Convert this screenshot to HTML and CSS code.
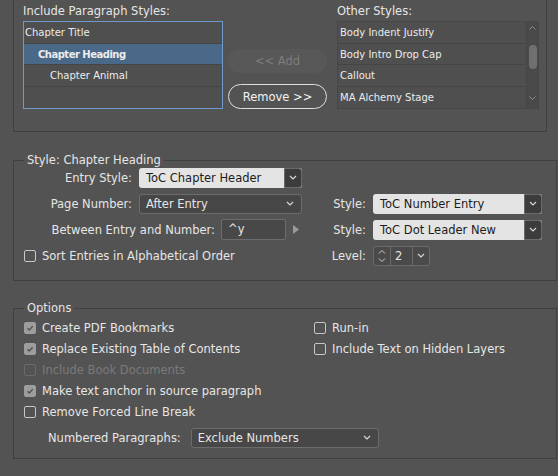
FILE: index.html
```html
<!DOCTYPE html>
<html>
<head>
<meta charset="utf-8">
<link rel="stylesheet" href="styles.css">
</head>
<body>
<div class="top-box">
  <div class="col-left">
    <div class="cap">Include Paragraph Styles:</div>
    <div class="list list-active">
      <div class="row">Chapter Title</div>
      <div class="row sel ind1">Chapter Heading</div>
      <div class="row ind2">Chapter Animal</div>
      <div class="row last"></div>
    </div>
  </div>
  <div class="col-mid">
    <div class="btn btn-add">&lt;&lt; Add</div>
    <div class="btn btn-remove">Remove &gt;&gt;</div>
  </div>
  <div class="col-right">
    <div class="cap">Other Styles:</div>
    <div class="list list-other">
      <div class="rows">
        <div class="row o">Body Indent Justify</div>
        <div class="row o">Body Intro Drop Cap</div>
        <div class="row o">Callout</div>
        <div class="row o last">MA Alchemy Stage</div>
      </div>
      <div class="scrollbar">
        <div class="sb-up"><svg width="7" height="4" viewBox="0 0 7 4"><path d="M0.5 3.5l3-3 3 3" fill="none" stroke="#8c8c8c" stroke-width="1"/></svg></div>
        <div class="sb-thumb"></div>
        <div class="sb-space"></div>
        <div class="sb-down"><svg width="7" height="4" viewBox="0 0 7 4"><path d="M0.5 0.5l3 3 3-3" fill="none" stroke="#8c8c8c" stroke-width="1"/></svg></div>
      </div>
    </div>
  </div>
</div>

<fieldset class="group style-group">
  <legend>Style: Chapter Heading</legend>
  <div class="srows">
    <div class="srow">
      <div class="left-cell">
        <span class="lbl w1">Entry Style:</span>
        <div class="drop light w-main"><span class="dtext">ToC Chapter Header</span><span class="dbtn"><svg width="8" height="5" viewBox="0 0 8 5"><path d="M1 1l3 3 3-3" fill="none" stroke="#d8d8d8" stroke-width="1.2"/></svg></span></div>
      </div>
    </div>
    <div class="srow">
      <div class="left-cell">
        <span class="lbl w1">Page Number:</span>
        <div class="drop dark w-main"><span class="dtext">After Entry</span><svg class="chev" width="8" height="5" viewBox="0 0 8 5"><path d="M1 1l3 3 3-3" fill="none" stroke="#d8d8d8" stroke-width="1.2"/></svg></div>
      </div>
      <div class="right-cell">
        <span class="lbl w2">Style:</span>
        <div class="drop light w-right"><span class="dtext">ToC Number Entry</span><span class="dbtn"><svg width="8" height="5" viewBox="0 0 8 5"><path d="M1 1l3 3 3-3" fill="none" stroke="#d8d8d8" stroke-width="1.2"/></svg></span></div>
      </div>
    </div>
    <div class="srow">
      <div class="left-cell">
        <span class="lbl w3">Between Entry and Number:</span>
        <div class="input">^y</div>
        <svg class="tri" width="6" height="9" viewBox="0 0 6 9"><path d="M0 0L6 4.5L0 9z" fill="#9a9a9a"/></svg>
      </div>
      <div class="right-cell">
        <span class="lbl w2">Style:</span>
        <div class="drop light w-right"><span class="dtext">ToC Dot Leader New</span><span class="dbtn"><svg width="8" height="5" viewBox="0 0 8 5"><path d="M1 1l3 3 3-3" fill="none" stroke="#d8d8d8" stroke-width="1.2"/></svg></span></div>
      </div>
    </div>
    <div class="srow">
      <div class="left-cell pad-cb">
        <span class="cb"></span>
        <span class="cb-text">Sort Entries in Alphabetical Order</span>
      </div>
      <div class="right-cell">
        <span class="lbl w2">Level:</span>
        <div class="spinner">
          <span class="sp-arrows"><svg width="8" height="14" viewBox="0 0 8 14"><path d="M1 4.5l3-3 3 3M1 9.5l3 3 3-3" fill="none" stroke="#cfcfcf" stroke-width="1"/></svg></span>
          <span class="sp-val">2</span>
          <span class="sp-chev"><svg width="8" height="5" viewBox="0 0 8 5"><path d="M1 1l3 3 3-3" fill="none" stroke="#d8d8d8" stroke-width="1.2"/></svg></span>
        </div>
      </div>
    </div>
  </div>
</fieldset>

<fieldset class="group opt-group">
  <legend>Options</legend>
  <div class="opts">
    <div class="opt-col">
      <div class="cb-row"><span class="cb on"><svg width="12" height="12" viewBox="0 0 12 12"><path d="M3 6.3l2.1 2.1L9.2 3.9" fill="none" stroke="#515151" stroke-width="1.6"/></svg></span><span class="cb-text">Create PDF Bookmarks</span></div>
      <div class="cb-row"><span class="cb on"><svg width="12" height="12" viewBox="0 0 12 12"><path d="M3 6.3l2.1 2.1L9.2 3.9" fill="none" stroke="#515151" stroke-width="1.6"/></svg></span><span class="cb-text">Replace Existing Table of Contents</span></div>
      <div class="cb-row disabled"><span class="cb"></span><span class="cb-text">Include Book Documents</span></div>
      <div class="cb-row"><span class="cb on"><svg width="12" height="12" viewBox="0 0 12 12"><path d="M3 6.3l2.1 2.1L9.2 3.9" fill="none" stroke="#515151" stroke-width="1.6"/></svg></span><span class="cb-text">Make text anchor in source paragraph</span></div>
      <div class="cb-row"><span class="cb"></span><span class="cb-text">Remove Forced Line Break</span></div>
    </div>
    <div class="opt-col">
      <div class="cb-row"><span class="cb"></span><span class="cb-text">Run-in</span></div>
      <div class="cb-row"><span class="cb"></span><span class="cb-text">Include Text on Hidden Layers</span></div>
    </div>
  </div>
  <div class="num-row">
    <span class="lbl">Numbered Paragraphs:</span>
    <div class="drop dark w-num"><span class="dtext">Exclude Numbers</span><svg class="chev" width="8" height="5" viewBox="0 0 8 5"><path d="M1 1l3 3 3-3" fill="none" stroke="#d8d8d8" stroke-width="1.2"/></svg></div>
  </div>
</fieldset>
</body>
</html>
```
FILE: styles.css
```css
* { box-sizing: border-box; }
html, body { margin: 0; padding: 0; }
body {
  background: #535353;
  width: 558px;
  height: 476px;
  overflow: hidden;
  font-family: "DejaVu Sans", sans-serif;
  font-size: 11.5px;
  color: #e6e6e6;
}

/* top box */
.top-box {
  margin: 0 11px 0 13px;
  height: 132px;
  border: 1px solid #404040;
  border-top: none;
  display: flex;
  padding-left: 9px;
}
.col-left { width: 200px; flex: none; }
.cap { height: 21px; line-height: 14px; padding-top: 4px; white-space: nowrap; }
.list {
  height: 88px;
  border: 1px solid #474747;
  background: #4f4f4f;
}
.list-active { border-color: #6e99c9; }
.row {
  height: 21.5px;
  line-height: 21px;
  border-bottom: 1px solid #454545;
  font-size: 10px;
  padding-left: 1px;
  white-space: nowrap;
  color: #ececec;
}
.row.last { border-bottom: none; }
.row.sel { background: #4a6888; font-weight: bold; letter-spacing: -0.5px; }
.row.ind1 { padding-left: 14px; }
.row.ind2 { padding-left: 26px; }
.row.o { padding-left: 2px; }

.col-mid {
  width: 99px;
  flex: none;
  margin-left: 5px;
  padding-top: 49px;
  display: flex;
  flex-direction: column;
  gap: 11px;
}
.btn {
  display: flex;
  align-items: center;
  justify-content: center;
  border-radius: 13px;
  font-size: 11.5px;
}
.btn-add { height: 24px; background: #585858; color: #7d7d7d; }
.btn-remove { height: 25px; border: 1px solid #dedede; color: #f2f2f2; }

.col-right { width: 202px; flex: none; margin-left: 10px; }
.list-other { display: flex; }
.list-other .rows { flex: 1; min-width: 0; }
.scrollbar {
  width: 12px;
  flex: none;
  background: #4a4a4a;
  border-left: 1px solid #464646;
  display: flex;
  flex-direction: column;
  align-items: center;
}
.sb-up { height: 23px; padding-top: 4px; display: flex; justify-content: center; }
.sb-thumb { width: 8px; height: 24px; background: #707070; border-radius: 4px; }
.sb-space { flex: 1; }
.sb-down { height: 12px; display: flex; justify-content: center; }

/* fieldsets */
.group {
  margin: 21px 1px 0 13px;
  border: 1px solid #404040;
  padding: 0 0 14px 0;
  min-width: 0;
}
.group legend {
  margin-left: 10px;
  padding: 0 3px;
  line-height: 14px;
  font-size: 11.5px;
}
.srows { display: flex; flex-direction: column; gap: 5px; }
.srow { display: flex; height: 21px; align-items: center; }
.left-cell { width: 296px; flex: none; display: flex; align-items: center; height: 21px; }
.right-cell { display: flex; align-items: center; height: 21px; }
.lbl { text-align: right; flex: none; white-space: nowrap; }
.w1 { width: 118px; margin-right: 7px; }
.w2 { width: 56px; margin-right: 7px; }
.w3 { width: 201px; margin-right: 6px; }

.drop {
  height: 20px;
  display: flex;
  align-items: center;
  border-radius: 3px;
  flex: none;
}
.drop .dtext { flex: 1; padding-left: 7px; white-space: nowrap; }
.drop.light { background: #e4e4e4; color: #1c1c1c; }
.drop.light .dbtn {
  width: 18px;
  height: 20px;
  background: #3c3c3c;
  border: 1px solid #6a6a6a;
  border-radius: 0 3px 3px 0;
  display: flex;
  align-items: center;
  justify-content: center;
}
.drop.dark { background: #474747; border: 1px solid #6c6c6c; }
.drop.dark .dtext { padding-left: 6px; }
.drop .chev { margin-right: 7px; }
.w-main { width: 163px; }
.w-right { width: 169px; }
.w-num { width: 188px; }

.input {
  width: 65px;
  height: 21px;
  background: #484848;
  border: 1px solid #6c6c6c;
  border-radius: 2px;
  padding-left: 6px;
  line-height: 19px;
}
.tri { margin-left: 7px; }

.pad-cb { padding-left: 10px; }
.cb {
  width: 12px;
  height: 12px;
  border: 1px solid #c6c6c6;
  border-radius: 2px;
  flex: none;
  display: flex;
  align-items: center;
  justify-content: center;
}
.cb.on { background: #9d9d9d; border-color: #9d9d9d; }
.cb-text { margin-left: 6px; white-space: nowrap; }

.spinner {
  width: 57px;
  height: 20px;
  border: 1px solid #6a6a6a;
  border-radius: 3px;
  background: #4a4a4a;
  display: flex;
}
.sp-arrows { width: 17px; border-right: 1px solid #6a6a6a; display: flex; align-items: center; justify-content: center; }
.sp-val { width: 22px; border-right: 1px solid #6a6a6a; padding-left: 4px; line-height: 18px; }
.sp-chev { flex: 1; display: flex; align-items: center; justify-content: center; }

/* options */
.opt-group { margin-top: 20px; padding-bottom: 10px; }
.opts {
  display: grid;
  grid-template-columns: 290px 1fr;
  padding-left: 10px;
  padding-top: 2px;
}
.cb-row { height: 21px; display: flex; align-items: center; }
.cb-row.disabled { color: #7a7a7a; }
.cb-row.disabled .cb { border-color: #6a6a6a; }
.num-row {
  margin-top: 5px;
  padding-left: 34px;
  display: flex;
  align-items: center;
  height: 21px;
}
.num-row .lbl { margin-right: 10px; }
```
